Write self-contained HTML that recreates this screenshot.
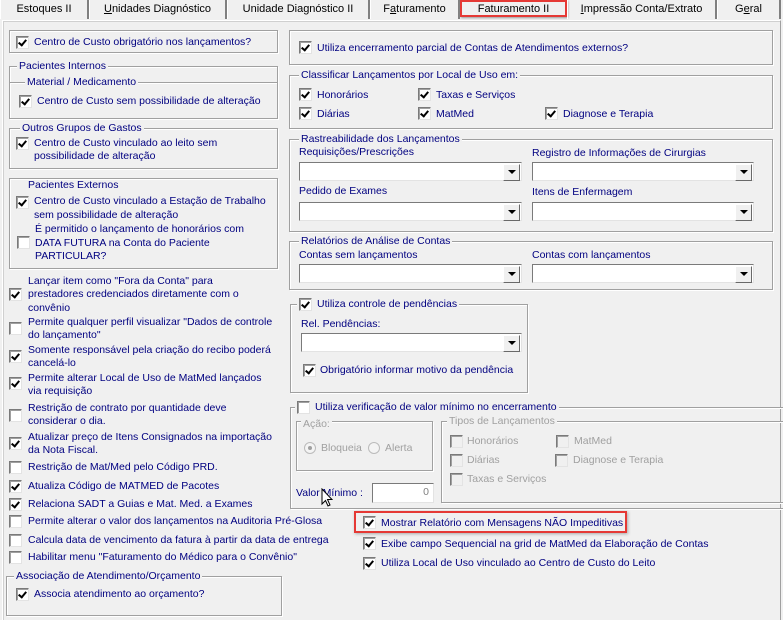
<!DOCTYPE html>
<html><head><meta charset="utf-8"><style>
*{margin:0;padding:0;box-sizing:border-box}
html,body{width:783px;height:607px}
body{background:#f0f0f0;position:relative;overflow:hidden;font-family:"Liberation Sans",Tahoma,sans-serif;font-size:10.5px;color:#000080}
.t{position:absolute;white-space:nowrap;line-height:13px}
.g{position:absolute;border:1px solid #a0a0a0;box-shadow:inset 1px 1px 0 #fff,1px 1px 0 #fff}
.lg{position:absolute;background:#f0f0f0;padding:0 2px;white-space:nowrap;line-height:13px}
.cb{position:absolute;width:13px;height:13px;background:#fff;border:1px solid #7a7a7a;border-right-color:#e3e3e3;border-bottom-color:#e3e3e3;box-shadow:inset 1px 1px 0 #a0a0a0}
.cb.k::after{content:"";position:absolute;left:3px;top:1px;width:3px;height:6px;border:solid #000;border-width:0 2px 2px 0;transform:rotate(40deg)}
.cb.d{background:#f0f0f0}
.dis{color:#a0a0a0}
.cmb{position:absolute;height:19px;background:#fff;border:1px solid #7a7a7a;border-right-color:#e3e3e3;border-bottom-color:#e3e3e3}
.cmb::after{content:"";position:absolute;right:1px;top:1px;width:15px;height:15px;background:#f0f0f0;border:1px solid #fff;border-right-color:#696969;border-bottom-color:#696969}
.cmb::before{content:"";position:absolute;right:5px;top:7px;border:4px solid transparent;border-top:4px solid #000;border-bottom:0;z-index:2}
.tab{position:absolute;top:0;height:19px;text-align:center;color:#000;line-height:18px;border-left:1px solid #fff;border-right:2px solid #808080;font-size:11px}
</style></head><body>
<div class="tab" style="left:0;width:89px">Estoques II</div>
<div class="tab" style="left:89px;width:138px"><u>U</u>nidades Diagnóstico</div>
<div class="tab" style="left:227px;width:143px">Unidade Diagnóstico II</div>
<div class="tab" style="left:370px;width:90px">F<u>a</u>turamento</div>
<div class="tab" style="left:460px;width:107px;top:0;height:17px;line-height:14px;border:2px solid #e53935;box-shadow:1px 1px 2px #999">Faturamento II</div>
<div class="tab" style="left:567px;width:150px"><u>I</u>mpressão Conta/Extrato</div>
<div class="tab" style="left:717px;width:64px">G<u>e</u>ral</div>
<div style="position:absolute;left:2px;top:20px;width:779px;height:600px;border-left:1px solid #fff;border-top:1px solid #fff;border-right:1px solid #a0a0a0;box-shadow:inset 1px 1px 0 #d0d0d0"></div>

<div class="g" style="left:9px;top:30px;width:269px;height:23px"></div>
<div class="cb k" style="left:16px;top:36px"></div><div class="t" style="left:34px;top:36px">Centro de Custo obrigatório nos lançamentos?</div>

<div class="g" style="left:9px;top:66px;width:269px;height:53px"></div>
<div class="lg" style="left:17px;top:60px">Pacientes Internos</div>
<div class="g" style="left:9px;top:82px;width:269px;height:37px"></div>
<div class="lg" style="left:25px;top:76px">Material / Medicamento</div>
<div class="cb k" style="left:19px;top:95px"></div><div class="t" style="left:37px;top:95px">Centro de Custo sem possibilidade de alteração</div>

<div class="g" style="left:9px;top:128px;width:269px;height:41px"></div>
<div class="lg" style="left:20px;top:122px">Outros Grupos de Gastos</div>
<div class="cb k" style="left:16px;top:137px"></div>
<div class="t" style="left:34px;top:137px">Centro de Custo vinculado ao leito sem<br>possibilidade de alteração</div>

<div class="g" style="left:9px;top:178px;width:269px;height:91px"></div>
<div class="t" style="left:28px;top:179px">Pacientes Externos</div>
<div class="cb k" style="left:16px;top:196px"></div>
<div class="t" style="left:34px;top:195px;line-height:13.5px">Centro de Custo vinculado a Estação de Trabalho<br>sem possibilidade de alteração</div>
<div class="cb" style="left:17px;top:236px"></div>
<div class="t" style="left:35px;top:223px;line-height:13.5px">É permitido o lançamento de honorários com<br>DATA FUTURA na Conta do Paciente<br>PARTICULAR?</div>

<div class="cb k" style="left:9px;top:288px"></div><div class="t" style="left:28px;top:275px;line-height:13.3px">Lançar item como "Fora da Conta" para<br>prestadores credenciados diretamente com o<br>convênio</div>
<div class="cb" style="left:9px;top:322px"></div><div class="t" style="left:28px;top:316px;line-height:13.3px">Permite qualquer perfil visualizar "Dados de controle<br>do lançamento"</div>
<div class="cb k" style="left:9px;top:350px"></div><div class="t" style="left:28px;top:344px;line-height:13.3px">Somente responsável pela criação do recibo poderá<br>cancelá-lo</div>
<div class="cb k" style="left:9px;top:377px"></div><div class="t" style="left:28px;top:372px;line-height:13.3px">Permite alterar Local de Uso de MatMed lançados<br>via requisição</div>
<div class="cb" style="left:9px;top:409px"></div><div class="t" style="left:28px;top:402px;line-height:13.3px">Restrição de contrato por quantidade deve<br>considerar o dia.</div>
<div class="cb k" style="left:9px;top:437px"></div><div class="t" style="left:28px;top:431px;line-height:13.3px">Atualizar preço de Itens Consignados na importação<br>da Nota Fiscal.</div>
<div class="cb" style="left:9px;top:461px"></div><div class="t" style="left:28px;top:461px">Restrição de Mat/Med pelo Código PRD.</div>
<div class="cb k" style="left:9px;top:480px"></div><div class="t" style="left:28px;top:480px">Atualiza Código de MATMED de Pacotes</div>
<div class="cb k" style="left:9px;top:498px"></div><div class="t" style="left:28px;top:498px">Relaciona SADT a Guias e Mat. Med. a Exames</div>
<div class="cb" style="left:9px;top:515px"></div><div class="t" style="left:28px;top:515px">Permite alterar o valor dos lançamentos na Auditoria Pré-Glosa</div>
<div class="cb" style="left:9px;top:534px"></div><div class="t" style="left:28px;top:534px">Calcula data de vencimento da fatura à partir da data de entrega</div>
<div class="cb" style="left:9px;top:551px"></div><div class="t" style="left:28px;top:551px">Habilitar menu "Faturamento do Médico para o Convênio"</div>

<div class="g" style="left:6px;top:576px;width:276px;height:40px"></div>
<div class="lg" style="left:14px;top:570px">Associação de Atendimento/Orçamento</div>
<div class="cb k" style="left:16px;top:588px"></div><div class="t" style="left:34px;top:588px">Associa atendimento ao orçamento?</div>

<div class="g" style="left:289px;top:30px;width:484px;height:35px"></div>
<div class="cb k" style="left:299px;top:41px"></div><div class="t" style="left:317px;top:42px">Utiliza encerramento parcial de Contas de Atendimentos externos?</div>

<div class="g" style="left:289px;top:75px;width:484px;height:54px"></div>
<div class="lg" style="left:299px;top:69px">Classificar Lançamentos por Local de Uso em:</div>
<div class="cb k" style="left:299px;top:88px"></div><div class="t" style="left:317px;top:89px">Honorários</div>
<div class="cb k" style="left:418px;top:88px"></div><div class="t" style="left:436px;top:89px">Taxas e Serviços</div>
<div class="cb k" style="left:299px;top:107px"></div><div class="t" style="left:317px;top:108px">Diárias</div>
<div class="cb k" style="left:418px;top:107px"></div><div class="t" style="left:436px;top:108px">MatMed</div>
<div class="cb k" style="left:545px;top:107px"></div><div class="t" style="left:563px;top:108px">Diagnose e Terapia</div>

<div class="g" style="left:289px;top:139px;width:484px;height:93px"></div>
<div class="lg" style="left:299px;top:133px">Rastreabilidade dos Lançamentos</div>
<div class="t" style="left:299px;top:146px">Requisições/Prescrições</div>
<div class="cmb" style="left:299px;top:162px;width:223px"></div>
<div class="t" style="left:532px;top:147px">Registro de Informações de Cirurgias</div>
<div class="cmb" style="left:532px;top:162px;width:222px"></div>
<div class="t" style="left:299px;top:185px">Pedido de Exames</div>
<div class="cmb" style="left:299px;top:202px;width:223px"></div>
<div class="t" style="left:532px;top:186px">Itens de Enfermagem</div>
<div class="cmb" style="left:532px;top:202px;width:222px"></div>

<div class="g" style="left:289px;top:241px;width:484px;height:49px"></div>
<div class="lg" style="left:299px;top:235px">Relatórios de Análise de Contas</div>
<div class="t" style="left:299px;top:249px">Contas sem lançamentos</div>
<div class="cmb" style="left:299px;top:264px;width:223px"></div>
<div class="t" style="left:532px;top:249px">Contas com lançamentos</div>
<div class="cmb" style="left:532px;top:264px;width:222px"></div>

<div class="g" style="left:290px;top:304px;width:238px;height:89px"></div>
<div class="lg" style="left:297px;top:298px;padding-left:20px">Utiliza controle de pendências</div>
<div class="cb k" style="left:299px;top:298px"></div>
<div class="t" style="left:301px;top:318px">Rel. Pendências:</div>
<div class="cmb" style="left:301px;top:333px;width:221px"></div>
<div class="cb k" style="left:303px;top:364px"></div><div class="t" style="left:320px;top:364px">Obrigatório informar motivo da pendência</div>

<div class="g" style="left:290px;top:407px;width:495px;height:102px"></div>
<div class="lg" style="left:295px;top:401px;padding-left:20px">Utiliza verificação de valor mínimo no encerramento</div>
<div class="cb" style="left:297px;top:401px"></div>
<div class="g" style="left:296px;top:421px;width:137px;height:50px"></div>
<div class="lg dis" style="left:301px;top:418px">Ação:</div>
<div style="position:absolute;left:304px;top:442px;width:12px;height:12px;border-radius:50%;border:1px solid #bbb;background:#f4f4f4"><div style="position:absolute;left:3px;top:3px;width:4px;height:4px;border-radius:50%;background:#a0a0a0"></div></div>
<div class="t dis" style="left:321px;top:442px">Bloqueia</div>
<div style="position:absolute;left:368px;top:442px;width:12px;height:12px;border-radius:50%;border:1px solid #bbb;background:#f4f4f4"></div>
<div class="t dis" style="left:385px;top:442px">Alerta</div>
<div class="g" style="left:441px;top:421px;width:345px;height:82px"></div>
<div class="lg dis" style="left:447px;top:415px">Tipos de Lançamentos</div>
<div class="cb d" style="left:450px;top:435px"></div><div class="t dis" style="left:467px;top:435px">Honorários</div>
<div class="cb d" style="left:450px;top:454px"></div><div class="t dis" style="left:467px;top:454px">Diárias</div>
<div class="cb d" style="left:450px;top:473px"></div><div class="t dis" style="left:467px;top:473px">Taxas e Serviços</div>
<div class="cb d" style="left:556px;top:435px"></div><div class="t dis" style="left:574px;top:435px">MatMed</div>
<div class="cb d" style="left:555px;top:454px"></div><div class="t dis" style="left:573px;top:454px">Diagnose e Terapia</div>
<div class="t" style="left:296px;top:487px">Valor Mínimo :</div>
<div style="position:absolute;left:372px;top:483px;width:62px;height:20px;background:#fff;border:1px solid #7a7a7a;border-right-color:#e3e3e3;border-bottom-color:#e3e3e3;text-align:right;padding-right:4px;line-height:17px;color:#808080">0</div>
<svg style="position:absolute;left:321px;top:488px" width="12" height="20" viewBox="0 0 12 20"><path d="M1 1 L1 16 L4.5 12.5 L7 18 L9 17 L6.5 11.5 L11 11.5 Z" fill="#fff" stroke="#000" stroke-width="1"/></svg>

<div style="position:absolute;left:354px;top:511px;width:273px;height:22px;border:2px solid #e53935;box-shadow:1px 1px 3px #aaa"></div>
<div class="cb k" style="left:363px;top:516px"></div><div class="t" style="left:381px;top:517px">Mostrar Relatório com Mensagens NÃO Impeditivas</div>
<div class="cb k" style="left:363px;top:537px"></div><div class="t" style="left:381px;top:538px">Exibe campo Sequencial na grid de MatMed da Elaboração de Contas</div>
<div class="cb k" style="left:363px;top:557px"></div><div class="t" style="left:381px;top:557px">Utiliza Local de Uso vinculado ao Centro de Custo do Leito</div>
</body></html>
